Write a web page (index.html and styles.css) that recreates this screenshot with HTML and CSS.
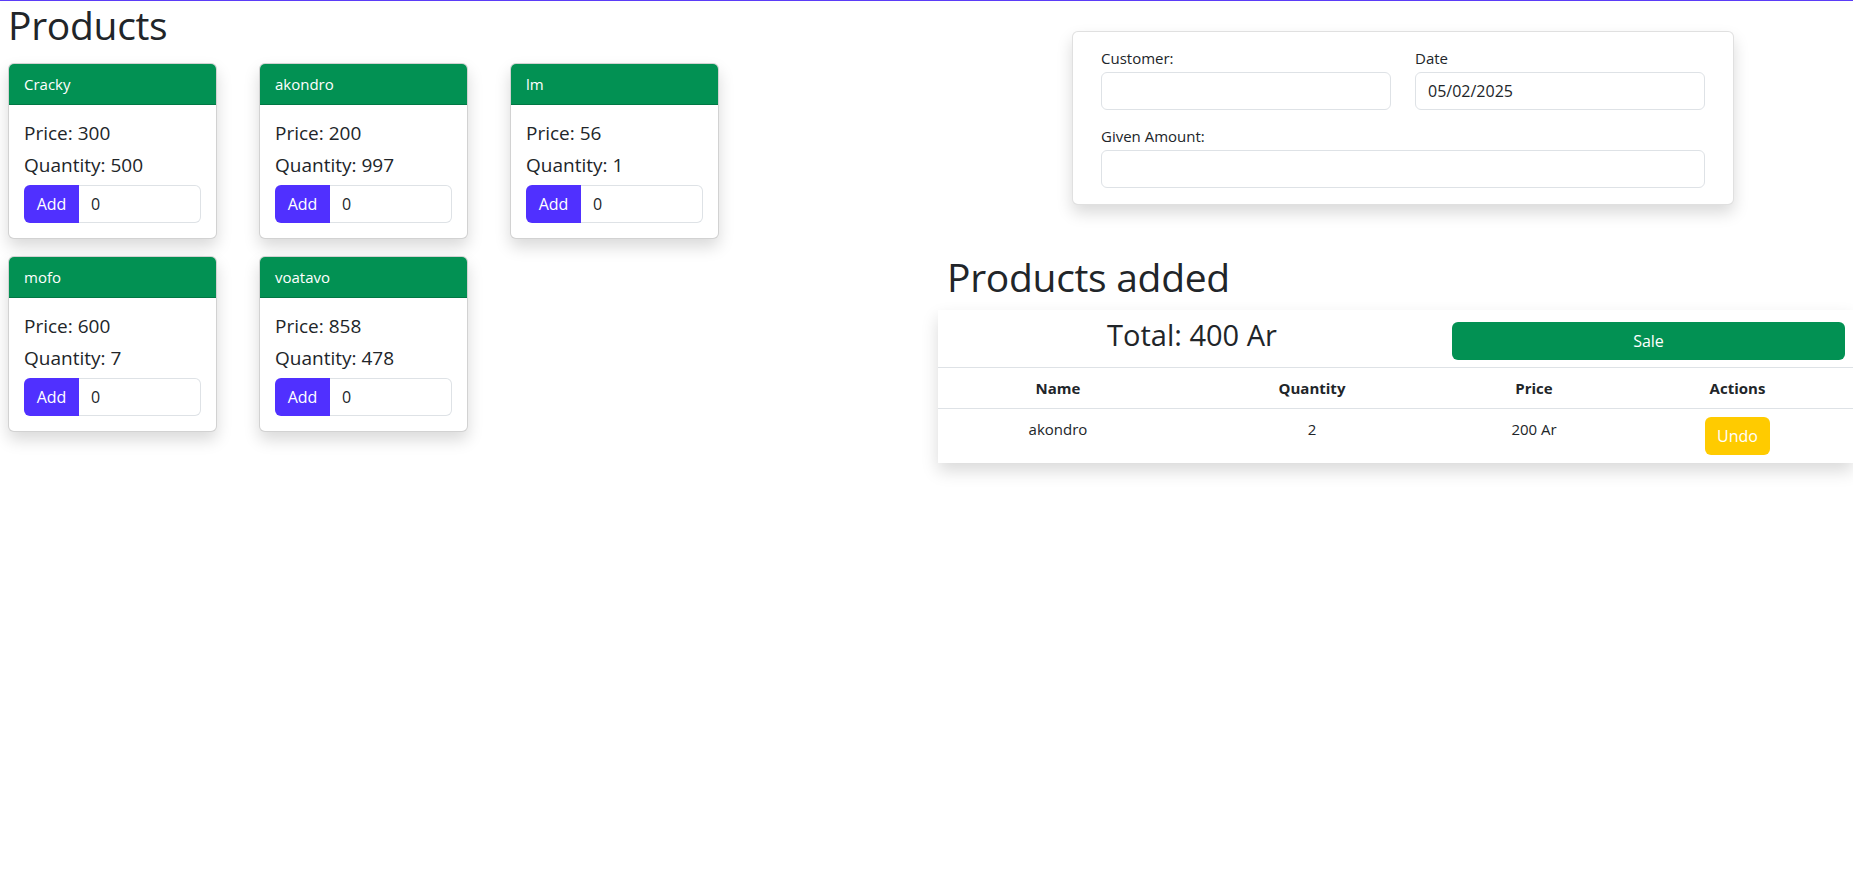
FILE: index.html
```html
<!DOCTYPE html>
<html lang="en">
<head>
<meta charset="utf-8">
<title>Products</title>
<link rel="stylesheet" href="styles.css">
</head>
<body>
<div class="topbar"></div>
<div class="page">
  <section class="left">
    <h1 class="title">Products</h1>
    <div class="products">
      <div class="pcard">
        <div class="pcard-head">Cracky</div>
        <div class="pcard-body">
          <div class="pline">Price: 300</div>
          <div class="pline">Quantity: 500</div>
          <div class="igroup"><button class="btn-add">Add</button><input class="qty" type="text" value="0"></div>
        </div>
      </div>
      <div class="pcard">
        <div class="pcard-head">akondro</div>
        <div class="pcard-body">
          <div class="pline">Price: 200</div>
          <div class="pline">Quantity: 997</div>
          <div class="igroup"><button class="btn-add">Add</button><input class="qty" type="text" value="0"></div>
        </div>
      </div>
      <div class="pcard">
        <div class="pcard-head">lm</div>
        <div class="pcard-body">
          <div class="pline">Price: 56</div>
          <div class="pline">Quantity: 1</div>
          <div class="igroup"><button class="btn-add">Add</button><input class="qty" type="text" value="0"></div>
        </div>
      </div>
      <div class="pcard">
        <div class="pcard-head">mofo</div>
        <div class="pcard-body">
          <div class="pline">Price: 600</div>
          <div class="pline">Quantity: 7</div>
          <div class="igroup"><button class="btn-add">Add</button><input class="qty" type="text" value="0"></div>
        </div>
      </div>
      <div class="pcard">
        <div class="pcard-head">voatavo</div>
        <div class="pcard-body">
          <div class="pline">Price: 858</div>
          <div class="pline">Quantity: 478</div>
          <div class="igroup"><button class="btn-add">Add</button><input class="qty" type="text" value="0"></div>
        </div>
      </div>
    </div>
  </section>
  <section class="right">
    <div class="formcard">
      <div class="fgrid">
        <div class="field">
          <label class="flabel">Customer:</label>
          <input class="finput" type="text" value="">
        </div>
        <div class="field">
          <label class="flabel">Date</label>
          <input class="finput" type="text" value="05/02/2025">
        </div>
        <div class="field wide">
          <label class="flabel">Given Amount:</label>
          <input class="finput" type="text" value="">
        </div>
      </div>
    </div>
    <h1 class="title added">Products added</h1>
    <div class="tcard">
      <div class="totalrow">
        <div class="total">Total: 400 Ar</div>
        <div class="salecell"><button class="btn-sale">Sale</button></div>
      </div>
      <table class="tbl">
        <colgroup>
          <col class="c1"><col class="c2"><col class="c3"><col class="c4">
        </colgroup>
        <thead>
          <tr><th>Name</th><th>Quantity</th><th>Price</th><th>Actions</th></tr>
        </thead>
        <tbody>
          <tr><td>akondro</td><td>2</td><td>200 Ar</td><td><button class="btn-undo">Undo</button></td></tr>
        </tbody>
      </table>
    </div>
  </section>
</div>
</body>
</html>
```
FILE: styles.css
```css
* { box-sizing: border-box; }
html { overflow: hidden; }
html, body { margin: 0; padding: 0; }
body {
  font-family: "Open Sans", "Noto Sans", sans-serif;
  font-size: 16px;
  line-height: 1.5;
  color: #212529;
  background: #fff;
  min-height: 869px;
}
.topbar {
  height: 1px;
  background: #5a3cf7;
  box-shadow: 0 2px 10px rgba(0,0,0,.08);
  position: relative;
  z-index: 2;
}
.page {
  display: grid;
  grid-template-columns: 926px 927px;
  padding-bottom: 40px;
}
.left { padding-left: 8px; }
.title {
  margin: 0 0 14px;
  font-size: 39px;
  font-weight: 400;
  line-height: 48px;
  letter-spacing: -0.3px;
}
.products {
  display: grid;
  grid-template-columns: repeat(3, 209px);
  column-gap: 42px;
  row-gap: 17px;
}
.pcard {
  border: 1px solid rgba(0,0,0,.175);
  border-radius: 6px;
  background: #fff;
  box-shadow: 0 8px 16px rgba(0,0,0,.15);
  overflow: hidden;
}
.pcard-head {
  background: #029153;
  color: #fff;
  padding: 8px 15px;
  line-height: 24px;
  font-size: 15px;
  border-bottom: 1px solid rgba(0,0,0,.175);
}
.pcard-body { padding: 16px 15px 15px; }
.pline {
  font-size: 19px;
  line-height: 24px;
  margin-bottom: 8px;
}
.igroup { display: flex; height: 38px; }
.btn-add {
  width: 55px;
  border: 0;
  background: #5030ff;
  color: #fff;
  font: inherit;
  font-size: 16px;
  border-radius: 6px 0 0 6px;
  padding: 0;
}
.qty {
  flex: 1;
  min-width: 0;
  border: 1px solid #dee2e6;
  border-left: 0;
  border-radius: 0 6px 6px 0;
  padding: 0 12px;
  font: inherit;
  font-size: 16px;
  color: #212529;
}
.right { padding-left: 12px; padding-top: 30px; }
.formcard {
  width: 662px;
  margin-left: 134px;
  border: 1px solid rgba(0,0,0,.12);
  border-radius: 6px;
  background: #fff;
  box-shadow: 0 8px 16px rgba(0,0,0,.15);
  padding: 14px 28px 16px;
}
.fgrid {
  display: grid;
  grid-template-columns: 290px 290px;
  column-gap: 24px;
  row-gap: 14px;
}
.field { display: flex; flex-direction: column; }
.field.wide { grid-column: 1 / span 2; }
.flabel {
  font-size: 15px;
  line-height: 24px;
  margin-bottom: 2px;
}
.finput {
  height: 38px;
  border: 1px solid #dee2e6;
  border-radius: 6px;
  padding: 0 12px;
  font: inherit;
  font-size: 16px;
  color: #212529;
}
.added { margin: 48px 0 9px 9px; }
.tcard {
  width: 915px;
  background: #fff;
  box-shadow: 0 8px 16px rgba(0,0,0,.15);
}
.totalrow {
  display: grid;
  grid-template-columns: 508px 1fr;
  height: 58px;
  border-bottom: 1px solid #dee2e6;
}
.total {
  text-align: center;
  font-size: 29px;
  line-height: 38px;
  padding-top: 6px;
}
.salecell { padding: 12px 8px 0 6px; }
.btn-sale {
  width: 100%;
  height: 38px;
  border: 0;
  border-radius: 6px;
  background: #029153;
  color: #fff;
  font: inherit;
  font-size: 16px;
}
.tbl {
  width: 915px;
  border-collapse: collapse;
  table-layout: fixed;
}
.c1 { width: 240px; }
.c2 { width: 268px; }
.c3 { width: 176px; }
.c4 { width: 231px; }
.tbl th, .tbl td {
  text-align: center;
  vertical-align: top;
  padding: 8px;
  line-height: 24px;
  font-size: 15px;
}
.tbl th { font-weight: 700; border-bottom: 1px solid #dee2e6; }
.btn-undo {
  height: 38px;
  width: 65px;
  border: 0;
  border-radius: 6px;
  background: #ffcb00;
  color: #fff;
  font: inherit;
  font-size: 16px;
  padding: 0;
}
```
